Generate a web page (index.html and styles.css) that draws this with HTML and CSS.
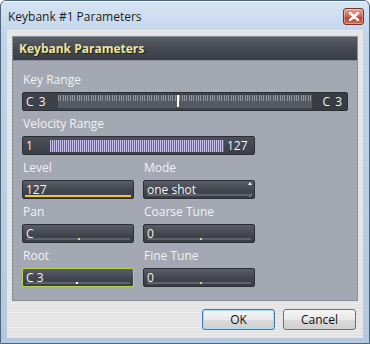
FILE: index.html
```html
<!DOCTYPE html>
<html lang="en">
<head>
    <meta charset="UTF-8">
    <title>Keybank #1 Parameters</title>
    <link rel="stylesheet" href="styles.css">
</head>
<body>

<div class="window">
    <!-- Title bar -->
    <div class="titlebar">
        <span class="title">Keybank #1 Parameters</span>
        <div class="close">
            <svg width="12" height="9" viewBox="0 0 12 9">
                <path d="M2 1 L10 8 M10 1 L2 8" stroke="#fff" stroke-width="2.4" stroke-linecap="round"/>
            </svg>
        </div>
    </div>

    <div class="client">
        <div class="panel">
            <div class="panel-head">Keybank Parameters</div>
            <div class="panel-body">
                <div class="group span3">
                    <div class="label">Key Range</div>
                    <div class="field keyrange">
                        <span class="kr-left">C 3</span>
                        <div class="keys"><i class="marker"></i></div>
                        <span class="kr-right">C 3</span>
                    </div>
                </div>
                <div class="group span2">
                    <div class="label">Velocity Range</div>
                    <div class="field velocity">
                        <span class="vel-left">1</span>
                        <div class="vel-ticks"></div>
                        <span class="vel-right">127</span>
                    </div>
                </div>
                <div class="group col1">
                    <div class="label">Level</div>
                    <div class="field level"><span>127</span></div>
                </div>
                <div class="group">
                    <div class="label">Mode</div>
                    <div class="field mode">
                        <span>one shot</span>
                        <div class="spin"><b class="up"></b><b class="down"></b></div>
                    </div>
                </div>
                <div class="group col1">
                    <div class="label">Pan</div>
                    <div class="field knob"><span>C</span><i class="dot" style="left: 55px"></i></div>
                </div>
                <div class="group">
                    <div class="label">Coarse Tune</div>
                    <div class="field knob"><span>0</span><i class="dot" style="left: 56px"></i></div>
                </div>
                <div class="group col1">
                    <div class="label">Root</div>
                    <div class="field knob selected"><span>C 3</span><i class="dot white" style="left: 53px"></i></div>
                </div>
                <div class="group">
                    <div class="label">Fine Tune</div>
                    <div class="field knob"><span>0</span><i class="dot" style="left: 56px"></i></div>
                </div>
            </div>
        </div>

        <div class="buttons">
            <button class="btn ok">OK</button>
            <button class="btn">Cancel</button>
        </div>
    </div>
</div>

</body>
</html>
```

FILE: styles.css
```css
body {
    margin: 0;
    font-family: 'Open Sans', 'DejaVu Sans', sans-serif;
    font-size: 12px;
    background: #fff;
}
.window {
    width: 370px;
    height: 344px;
    box-sizing: border-box;
    border: 1px solid #4e6580;
    border-radius: 6px 6px 0 0;
    background: linear-gradient(to bottom, #d6e4f3, #bfd3ea 40px, #b4c8de);
    overflow: hidden;
}
.titlebar {
    height: 29px;
    display: flex;
    align-items: center;
    justify-content: space-between;
    padding: 0 5px 0 7px;
    box-shadow: inset 0 1px 0 rgba(255, 255, 255, 0.7);
}
.title {
    color: #1c1c1c;
    font-size: 12px;
    padding-top: 1px;
}
.close {
    width: 19px;
    height: 15px;
    border: 1px solid #70342a;
    border-radius: 3px;
    background: linear-gradient(to bottom, #e9a193, #d0644e 50%, #b8412a 51%, #cf6a52);
    display: flex;
    align-items: center;
    justify-content: center;
    margin-top: 2px;
    box-shadow: inset 0 0 0 1px rgba(255, 255, 255, 0.35);
}
.client {
    margin: 0 6px 5px 6px;
    height: 308px;
    box-sizing: border-box;
    padding: 7px 6px 0 6px;
    background: repeating-linear-gradient(to bottom, #ebebeb 0 1px, #e3e3e3 1px 3px);
}
.panel {
    height: 263px;
    background: #a4a8b3;
    box-shadow: 0 0 0 1px #8a8e98;
}
.panel-head {
    height: 24px;
    line-height: 23px;
    padding-left: 6px;
    background: linear-gradient(to bottom, #5b5f69, #454951 50%, #3b3e46);
    border-bottom: 1px solid #888c96;
    color: #eee59c;
    font-weight: bold;
    font-size: 12px;
    text-shadow: 1px 1px 0 #1e2026;
    box-sizing: border-box;
}
.panel-body {
    display: grid;
    grid-template-columns: 112px 112px 84px;
    column-gap: 9px;
    row-gap: 5px;
    padding: 11px 9px 0 9px;
}
.span3 {
    grid-column: span 3;
}
.span2 {
    grid-column: 1 / span 2;
}
.col1 {
    grid-column: 1;
}
.label {
    height: 16px;
    line-height: 16px;
    margin-bottom: 4px;
    color: #f0f2f6;
    font-size: 12px;
    padding-left: 1px;
}
.field {
    position: relative;
    height: 19px;
    box-sizing: border-box;
    border: 1px solid #2c2e35;
    border-radius: 2px;
    background: linear-gradient(to bottom, #5a5d67, #41444d 60%, #3a3d45);
    color: #f4f4f4;
    font-size: 12px;
    line-height: 15px;
    display: flex;
    align-items: center;
}
.field span {
    padding-left: 3px;
    padding-bottom: 1px;
}
.keyrange {
    background: #3e4149;
}
.kr-left {
    width: 32px;
    flex: none;
    letter-spacing: 1px;
}
.keys {
    position: relative;
    flex: 1;
    height: 13px;
    background:
        repeating-linear-gradient(to right, #9296a0 0 1px, transparent 1px 2px, #9296a0 2px 3px, transparent 3px 4px, transparent 4px 5px, #9296a0 5px 6px, transparent 6px 7px) top / 100% 6px no-repeat,
        #555962;
}
.marker {
    position: absolute;
    left: 119px;
    top: 0;
    width: 2px;
    height: 12px;
    background: #fff;
}
.kr-right {
    width: 35px;
    height: 17px;
    line-height: 17px;
    flex: none;
    text-align: right;
    padding-right: 4px;
    box-sizing: border-box;
    background: #383b42;
    letter-spacing: 1px;
}
.velocity {
    background: linear-gradient(to bottom, #4d505a, #3a3d45);
}
.vel-left {
    width: 24px;
    flex: none;
}
.vel-ticks {
    flex: 1;
    height: 12px;
    background: repeating-linear-gradient(to right, #cbc4ee 0 1px, #66647e 1px 2px);
}
.vel-right {
    width: 27px;
    flex: none;
    padding-left: 3px;
}
.level::after {
    content: "";
    position: absolute;
    left: 2px;
    right: 2px;
    bottom: 1px;
    height: 2px;
    background: #edc83c;
}
.knob::after,
.mode::after {
    content: "";
    position: absolute;
    left: 3px;
    right: 3px;
    bottom: 2px;
    height: 2px;
    background: #5f636d;
}
.dot {
    position: absolute;
    bottom: 2px;
    width: 2px;
    height: 2px;
    background: #d6cf7e;
    z-index: 1;
}
.dot.white {
    background: #fff;
}
.selected {
    border-color: #b6d34a;
}
.mode {
    justify-content: space-between;
}
.spin {
    display: flex;
    flex-direction: column;
    justify-content: space-between;
    height: 15px;
    margin-right: 2px;
}
.spin b {
    width: 0;
    height: 0;
    border-left: 2px solid transparent;
    border-right: 2px solid transparent;
}
.spin .up {
    border-bottom: 3px solid #f0f0f0;
}
.spin .down {
    border-top: 3px solid #f0f0f0;
}
.buttons {
    display: flex;
    justify-content: flex-end;
    gap: 8px;
    margin-top: 9px;
    padding-right: 1px;
}
.btn {
    width: 73px;
    height: 21px;
    border: 1px solid #707070;
    border-radius: 3px;
    background: linear-gradient(to bottom, #f6f6f6, #e8e8e8 50%, #dadada 51%, #d0d0d0);
    font-family: 'Open Sans', 'DejaVu Sans', sans-serif;
    font-size: 12px;
    color: #111;
    padding: 0;
}
.btn.ok {
    border-color: #3d7bad;
    box-shadow: inset 0 0 0 1px #a6dcf4;
}
```
